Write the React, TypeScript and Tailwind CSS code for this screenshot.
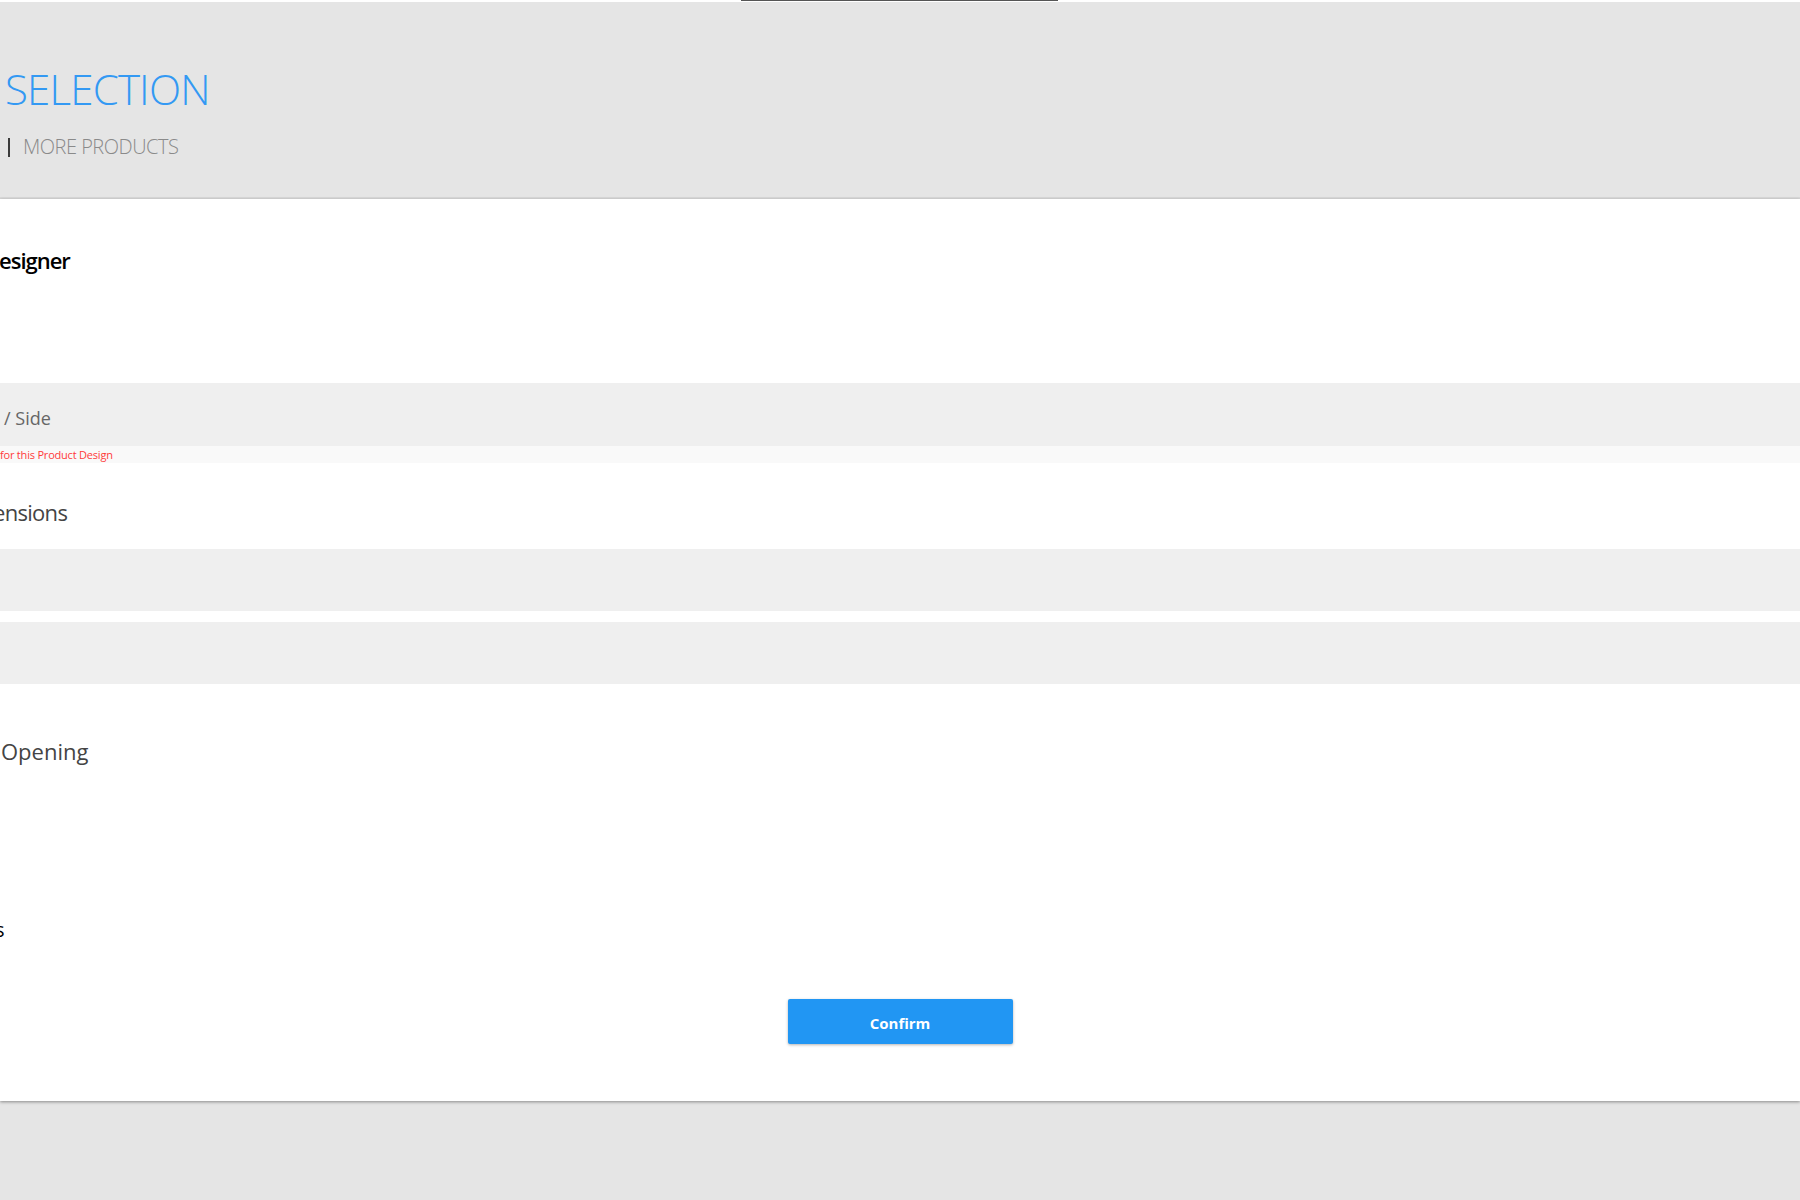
import React from "react";

export default function App() {
  return (
    <div
      className="flex h-[1200px] w-[1800px] flex-col overflow-hidden bg-[#e5e5e5]"
      style={{ fontFamily: '"Open Sans", "Noto Sans", Arial, sans-serif' }}
    >
      <div className="h-[2px] shrink-0 bg-white">
        <div className="ml-[741px] h-px w-[317px] bg-[#555555]" />
      </div>
      <header className="h-[197px] shrink-0 border-b-2 border-[#d9d9d9] bg-[#e5e5e5] pt-[66px]">
        <h1 className="pl-[5px] text-[42px] font-light leading-none tracking-[-0.8px] text-[#3399f3]">SELECTION</h1>
        <div className="mt-[27px] flex items-center">
          <div className="ml-[8px] h-[19px] w-[2px] bg-[#3b3b3b]" />
          <span className="ml-[13px] text-[20px] font-light leading-none tracking-[-0.5px] text-[#8a8a8a]">MORE PRODUCTS</span>
        </div>
      </header>
      <main className="relative z-10 h-[902px] shrink-0 bg-white shadow-[0_1px_3px_rgba(0,0,0,0.4)]">
        <div className="h-[184px] pt-[50px]">
          <div className="-ml-[1px] text-[22px] font-semibold leading-none tracking-[-1px] text-black">esigner</div>
        </div>
        <div className="h-[63px] bg-[#efefef] pt-[26px]">
          <div className="pl-[4px] text-[18px] leading-none text-[#666666]">/ Side</div>
        </div>
        <div className="h-[17px] bg-[#f9f9f9] pt-[3px]">
          <div className="text-[11px] leading-none tracking-[-0.2px] text-[#ff3b3b]">for this Product Design</div>
        </div>
        <div className="h-[86px] pt-[38px]">
          <div className="-ml-[7px] text-[22px] leading-none tracking-[-0.7px] text-[#444444]">ensions</div>
        </div>
        <div className="h-[62px] bg-[#efefef]" />
        <div className="h-[11px]" />
        <div className="h-[62px] bg-[#efefef]" />
        <div className="flex flex-col pt-[56px]">
          <div className="pl-[1px] text-[22px] leading-none text-[#444444]">Opening</div>
          <div className="-ml-[5px] mt-[158px] text-[20px] leading-none text-black">s</div>
          <button className="mx-auto mt-[59px] h-[45px] w-[225px] rounded-[2px] bg-[#2196f3] pt-[3px] text-[15px] font-bold text-white shadow-[0_1px_3px_rgba(0,0,0,0.3)]">
            Confirm
          </button>
        </div>
      </main>
    </div>
  );
}
